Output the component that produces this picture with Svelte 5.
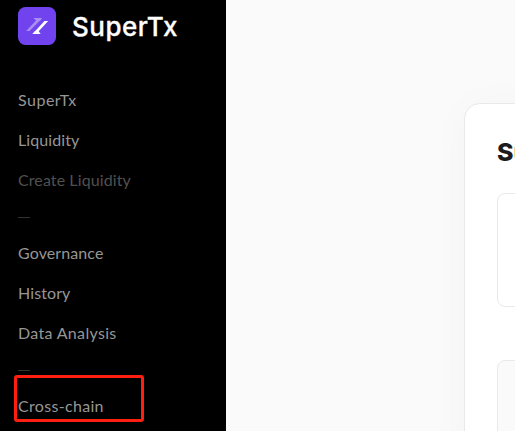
<script>
  const groups = [
    [
      { label: 'SuperTx', spacing: 0.5 },
      { label: 'Liquidity', spacing: 0.1 },
      { label: 'Create Liquidity', spacing: 0.1, disabled: true }
    ],
    [
      { label: 'Governance', spacing: 0.1 },
      { label: 'History', spacing: 0.1 },
      { label: 'Data Analysis', spacing: 0.33 }
    ],
    [{ label: 'Cross-chain', spacing: 0.32, marked: true }]
  ];
</script>

<div class="app">
  <aside>
    <header>
      <svg class="logo" viewBox="0 0 38 38" aria-hidden="true">
        <rect width="38" height="38" rx="7.5" fill="#7043ee" />
        <path d="M8.2 24L19 12.5L22 13.5L11.5 24Z" fill="#aa8df5" />
        <path d="M15.5 11H24L22 14H18.5Z" fill="#aa8df5" />
        <path d="M26.5 14H30.2L19.5 25.5L16.5 24.8Z" fill="#fff" />
        <path d="M14.3 27L17 24H20.5L22.7 27Z" fill="#fff" />
      </svg>
      <span class="brand">SuperTx</span>
    </header>
    <nav>
      {#each groups as group, i}
        {#if i > 0}<div class="divider"></div>{/if}
        {#each group as item}
          <div class="item" class:disabled={item.disabled} class:marked={item.marked}>
            <span style="letter-spacing: {item.spacing}px">{item.label}</span>
          </div>
        {/each}
      {/each}
    </nav>
  </aside>
  <main>
    <section class="card">
      <h1>Su</h1>
      <div class="field first"></div>
      <div class="field second"></div>
    </section>
  </main>
</div>

<style>
  :global(body) { margin: 0; overflow: hidden; }
  .app {
    display: flex;
    width: 515px;
    height: 431px;
    overflow: hidden;
    background: #fafafa;
  }
  aside {
    flex: 0 0 226px;
    box-sizing: border-box;
    padding: 7px 0 0 18px;
    background: #000;
  }
  header { display: flex; align-items: center; height: 38px; }
  .logo { width: 38px; height: 38px; flex: none; }
  .brand {
    margin-left: 16px;
    color: #fff;
    font: 500 26px/40px Inter, sans-serif;
    letter-spacing: 0.5px;
    padding-top: 2px;
    -webkit-text-stroke: 0.3px #fff;
  }
  nav { padding-top: 36px; }
  .item {
    height: 40px;
    color: #969696;
    font: 400 16px/38px Lato, sans-serif;
    white-space: nowrap;
  }
  .disabled { color: #505050; }
  .divider { width: 12px; height: 1px; margin: 16px 0; background: #333; }
  .marked { position: relative; }
  .marked::after {
    content: '';
    position: absolute;
    left: -4px;
    top: -12px;
    width: 124px;
    height: 41px;
    border: 3px solid #ff1f10;
    border-radius: 3px;
  }
  main { flex: 1; min-width: 0; padding: 103px 0 0 238px; }
  .card {
    box-sizing: border-box;
    width: 480px;
    height: 500px;
    padding: 32px 32px 0;
    border: 1px solid #e9e9e9;
    border-radius: 16px;
    background: #fff;
    box-shadow: 0 4px 40px rgba(0, 0, 0, 0.03);
  }
  h1 {
    margin: 0;
    color: #1c1c1c;
    font: 800 25px/32px Inter, sans-serif;
    height: 34px;
    letter-spacing: -0.1px;
  }
  .field { box-sizing: border-box; border: 1px solid #e9e9e9; border-radius: 8px; }
  .first { height: 114px; margin-top: 23px; }
  .second { height: 114px; margin-top: 53px; background: #fafafa; }
</style>
